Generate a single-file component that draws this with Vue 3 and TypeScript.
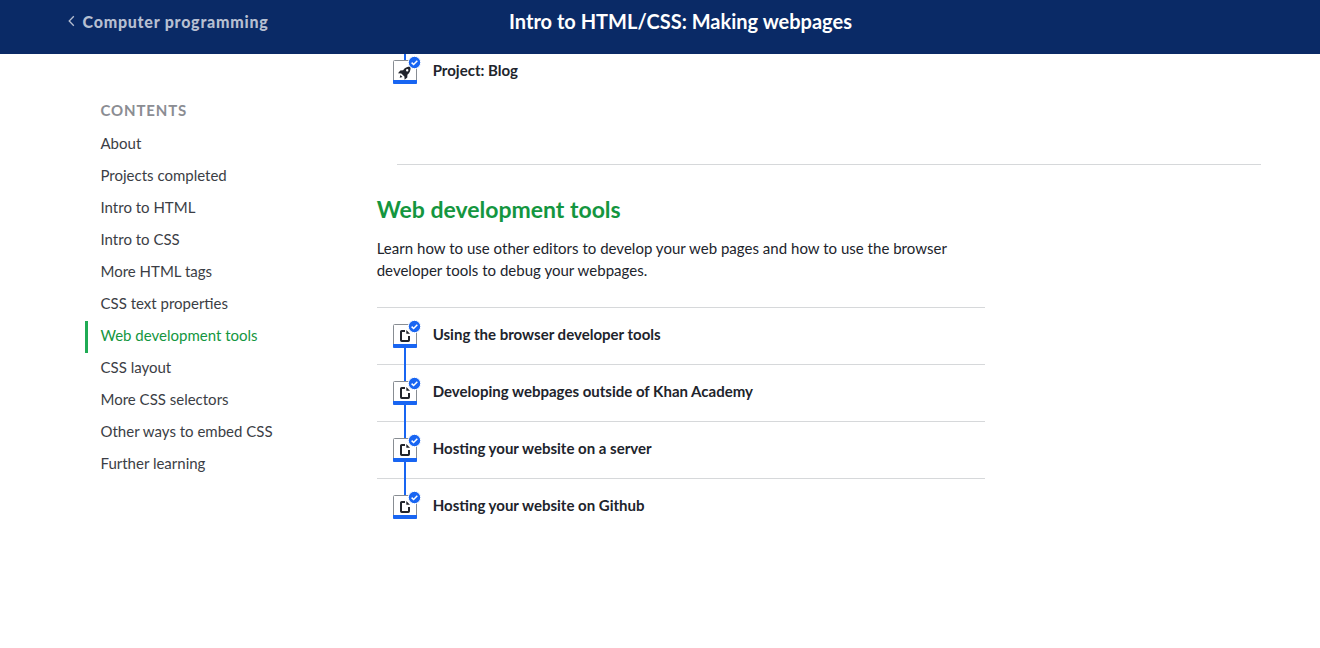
<script setup lang="ts">
const contents: string[] = ['About', 'Projects completed', 'Intro to HTML', 'Intro to CSS', 'More HTML tags', 'CSS text properties', 'Web development tools', 'CSS layout', 'More CSS selectors', 'Other ways to embed CSS', 'Further learning']
const active = 'Web development tools'
const lessons: string[] = ['Using the browser developer tools', 'Developing webpages outside of Khan Academy', 'Hosting your website on a server', 'Hosting your website on Github']
</script>

<template>
  <div class="page">
    <header>
      <a class="back"><svg width="8" height="12" viewBox="0 0 8 12"><path d="M6.8 1.2 2.2 6l4.6 4.8" /></svg><span>Computer programming</span></a>
      <h1>Intro to HTML/CSS: Making webpages</h1>
    </header>
    <div class="body">
      <nav>
        <h2>CONTENTS</h2>
        <a v-for="item in contents" :key="item" :class="{ active: item === active }">{{ item }}</a>
      </nav>
      <main>
        <div class="project">
          <svg class="icon" width="30" height="34" viewBox="0 0 30 34">
            <path class="line" d="M13 2v7" />
            <rect class="box" x="1.5" y="8.5" width="23" height="23" rx="1" /><path class="base" d="M1 28h24v3a1 1 0 0 1-1 1H2a1 1 0 0 1-1-1z" />
            <path class="ink" fill-rule="evenodd" d="M18.6 14.6c-3.6 0-5.8 1.3-7.5 3.7l-2.8.1-2.3 2.8 3.3.2 3.1 3.1.2 3.2 2.7-2.3.1-2.7c2.3-1.8 3.4-4 3.2-8.1zM15.2 17a1.2 1.2 0 1 1 0 2.4 1.2 1.2 0 0 1 0-2.4zM8.4 22.9l2.1 2.1-2.8.7z" />
            <circle class="badge" cx="22.5" cy="10.5" r="6.2" /><path class="check" d="m19.6 10.6 2 1.9 3.7-3.8" />
          </svg>
          <span>Project: Blog</span>
        </div>
        <section>
          <h2>Web development tools</h2>
          <p>Learn how to use other editors to develop your web pages and how to use the browser<br>developer tools to debug your webpages.</p>
          <ul>
            <li v-for="(lesson, i) in lessons" :key="lesson">
              <svg class="icon" width="30" height="57" viewBox="0 0 30 57">
                <path v-if="i > 0" class="line" d="M13 0v17" /><path v-if="i < lessons.length - 1" class="line" d="M13 40v17" />
                <rect class="box" x="1.5" y="17.5" width="23" height="23" rx="1" /><path class="base" d="M1 37h24v3a1 1 0 0 1-1 1H2a1 1 0 0 1-1-1z" />
                <path class="doc" d="M13 24H9.7a.7.7 0 0 0-.7.7v8.6c0 .4.3.7.7.7h6.6a.7.7 0 0 0 .7-.7V29" /><path class="ink" d="M14.3 23l3.7 3.8h-3.7z" />
                <circle class="badge" cx="22.5" cy="19.5" r="6.2" /><path class="check" d="m19.6 19.6 2 1.9 3.7-3.8" />
              </svg>
              <span>{{ lesson }}</span>
            </li>
          </ul>
        </section>
      </main>
    </div>
  </div>
</template>

<style>
html, body { margin: 0; overflow: hidden; background: #fff; }
</style>
<style scoped>
.page { height: 648px; overflow: hidden; font-family: Lato, sans-serif; color: #21242c; }
header { height: 54px; background: #0a2a66; display: grid; grid-template-columns: 509px 1fr; }
.back { padding: 10px 0 0 67px; display: flex; gap: 7.5px; height: 24px; font-size: 16px; line-height: 24px; color: #b6bfd1; }
.back span { font-weight: 900; letter-spacing: .76px; }
.back svg { margin-top: 5px; fill: none; stroke: #b6bfd1; stroke-width: 1.3; }
h1 { margin: 9px 0 0; font-size: 20px; line-height: 25px; color: #fff; white-space: nowrap; letter-spacing: .01px; }
.body { display: flex; height: 594px; }
nav { width: 292px; padding: 42px 0 0 85px; box-sizing: border-box; }
nav h2 { margin: 0; padding-left: 15.5px; font-size: 15px; line-height: 29px; height: 33px; letter-spacing: .85px; color: #8b8d93; }
nav a { display: block; height: 32px; padding-left: 12.5px; border-left: 3px solid transparent; box-sizing: border-box; line-height: 29px; font-size: 15px; color: #3b3e45; }
nav a.active { border-color: #1fab54; color: #14963f; }
main { margin-left: 84.7px; width: 884.7px; }
.project { margin-left: 20px; height: 110px; border-bottom: 1px solid #d6d8da; display: flex; }
.project .icon { margin-left: -5px; margin-top: -2px; }
.project span { margin-left: 11px; line-height: 32px; }
.project span, li span { font-size: 15.03px; font-weight: 700; }
section h2 { margin: 28px 0 12px; font-size: 23px; line-height: 32px; color: #14963f; }
p { margin: 0; font-size: 15px; line-height: 22px; letter-spacing: .02px; }
ul { width: 608px; list-style: none; margin: 26px 0 0; padding: 0; }
li { height: 57px; display: flex; border-top: 1px solid #d6d8da; box-sizing: border-box; padding-left: 15px; }
li .icon { margin-top: -1px; }
li span { margin-left: 11px; line-height: 53px; }
svg { flex-shrink: 0; }
.line { stroke: #1865f2; stroke-width: 2; fill: none; }
.box { fill: #fff; stroke: #888d93; }
.base, .badge { fill: #1865f2; }
.badge { stroke: #fff; }
.ink { fill: #21242c; }
.doc { fill: none; stroke: #21242c; stroke-width: 2; }
.check { fill: none; stroke: #fff; stroke-width: 1.5; }
</style>
